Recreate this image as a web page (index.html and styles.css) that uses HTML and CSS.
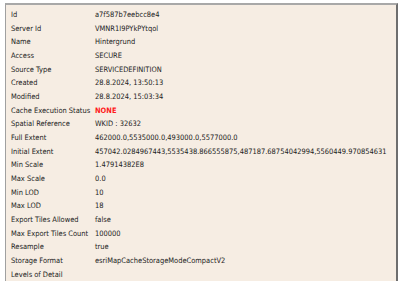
FILE: index.html
```html
<!DOCTYPE html>
<html>
<head>
<meta charset="utf-8">
<link rel="stylesheet" href="styles.css">
</head>
<body>
<div class="panel">
  <div class="props">
    <div class="k">Id</div><div class="v">a7f587b7eebcc8e4</div>
    <div class="k">Server Id</div><div class="v">VMNR1I9PYkPYtqol</div>
    <div class="k">Name</div><div class="v">Hintergrund</div>
    <div class="k">Access</div><div class="v">SECURE</div>
    <div class="k">Source Type</div><div class="v">SERVICEDEFINITION</div>
    <div class="k">Created</div><div class="v">28.8.2024, 13:50:13</div>
    <div class="k">Modified</div><div class="v">28.8.2024, 15:03:34</div>
    <div class="k">Cache Execution Status</div><div class="v none">NONE</div>
    <div class="k">Spatial Reference</div><div class="v">WKID : 32632</div>
    <div class="k">Full Extent</div><div class="v">462000.0,5535000.0,493000.0,5577000.0</div>
    <div class="k">Initial Extent</div><div class="v">457042.0284967443,5535438.866555875,487187.68754042994,5560449.970854631</div>
    <div class="k">Min Scale</div><div class="v">1.47914382E8</div>
    <div class="k">Max Scale</div><div class="v">0.0</div>
    <div class="k">Min LOD</div><div class="v">10</div>
    <div class="k">Max LOD</div><div class="v">18</div>
    <div class="k">Export Tiles Allowed</div><div class="v">false</div>
    <div class="k">Max Export Tiles Count</div><div class="v">100000</div>
    <div class="k">Resample</div><div class="v">true</div>
    <div class="k">Storage Format</div><div class="v">esriMapCacheStorageModeCompactV2</div>
    <div class="k">Levels of Detail</div><div class="v"></div>
  </div>
  <div class="lod">Level ID: 10</div>
</div>
</body>
</html>
```
FILE: styles.css
```css
html, body {
  margin: 0;
  padding: 0;
  background: #ffffff;
}
body {
  font-family: "DejaVu Sans Condensed", "DejaVu Sans", sans-serif;
  font-size: 7.45px;
  color: #222222;
}
.panel {
  margin: 3px 2px 0 5px;
  background: #f6ede3;
  border-top: 2px solid #a8a8a8;
  border-left: 1px solid #a0a0a0;
  border-right: 2px solid #6e6e6e;
  height: 400px;
  box-sizing: border-box;
  padding: 3px 0 0 5px;
}
.props {
  display: grid;
  grid-template-columns: 84px 1fr;
  grid-auto-rows: 13.68px;
  align-items: center;
}
.k, .v {
  white-space: nowrap;
  line-height: 13.68px;
}
.none {
  color: #ff1a1a;
  font-weight: bold;
}
.lod {
  padding: 0 0 0 107px;
  font-weight: bold;
  font-size: 9px;
  line-height: 14px;
}
```
